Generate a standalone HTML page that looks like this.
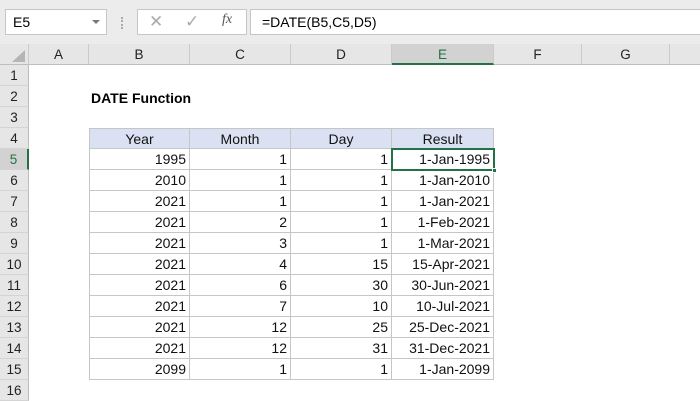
<!DOCTYPE html>
<html><head><style>
body{margin:0;width:700px;height:400px;overflow:hidden;background:#fff;font-family:"Liberation Sans",sans-serif;position:relative}
.a{position:absolute;box-sizing:border-box}
.tb{left:0;top:0;width:700px;height:44px;background:#ececec}
.box{background:#fff;border:1px solid #c6c6c6}
.ch{top:44px;height:21px;background:#e6e6e6;border-right:1px solid #cbcbcb;border-bottom:1px solid #bdbdbd;font-size:13.5px;text-align:center;line-height:21px;color:#222}
.rh{left:0;width:29px;height:21px;background:#e6e6e6;border-right:1px solid #bdbdbd;border-bottom:1px solid #d4d4d4;font-size:13.5px;text-align:center;line-height:21px;color:#222}
.c{height:21px;border-right:1px solid #c6c6c6;border-bottom:1px solid #c6c6c6;font-size:14px;line-height:21px;text-align:right;padding-right:3px;color:#111}
.h{background:#d9e1f2;text-align:center;padding:0}
</style></head><body>
<div class="a tb"></div>
<div class="a box" style="left:5px;top:9px;width:102px;height:26px;font-size:14px;line-height:24px;padding-left:7px">E5</div>
<div class="a" style="left:92px;top:20px;width:0;height:0;border-left:4px solid transparent;border-right:4px solid transparent;border-top:4px solid #777"></div>
<div class="a" style="left:121px;top:17px;width:2px;height:12px;border-left:2px dotted #aaa"></div>
<div class="a box" style="left:137px;top:9px;width:110px;height:26px"></div>
<div class="a" style="left:149px;top:12px;font-size:17px;color:#aaa">✕</div>
<div class="a" style="left:185px;top:12px;font-size:17px;color:#aaa">✓</div>
<div class="a" style="left:222px;top:12px;font-size:14px;font-style:italic;font-family:'Liberation Serif',serif;color:#555">fx</div>
<div class="a box" style="left:250px;top:9px;width:460px;height:26px;font-size:14px;line-height:24px;padding-left:11px">=DATE(B5,C5,D5)</div>
<div class="a ch" style="left:0;width:29px"></div>
<div class="a" style="left:12px;top:50px;width:0;height:0;border-left:13px solid transparent;border-bottom:12px solid #b5b5b5"></div>
<div class="a ch" style="left:29px;width:60px">A</div>
<div class="a ch" style="left:89px;width:101px">B</div>
<div class="a ch" style="left:190px;width:101px">C</div>
<div class="a ch" style="left:291px;width:101px">D</div>
<div class="a ch" style="left:392px;width:102px;background:#d2d2d2;border-bottom:2px solid #217346;color:#217346">E</div>
<div class="a ch" style="left:494px;width:88px">F</div>
<div class="a ch" style="left:582px;width:88px">G</div>
<div class="a ch" style="left:670px;width:40px"></div>
<div id="rows"></div>
<div class="a" style="left:91px;top:88px;font-size:14px;font-weight:bold;line-height:21px">DATE Function</div>
<script>
var d=[["Year","Month","Day","Result"],[1995,1,1,"1-Jan-1995"],[2010,1,1,"1-Jan-2010"],[2021,1,1,"1-Jan-2021"],[2021,2,1,"1-Feb-2021"],[2021,3,1,"1-Mar-2021"],[2021,4,15,"15-Apr-2021"],[2021,6,30,"30-Jun-2021"],[2021,7,10,"10-Jul-2021"],[2021,12,25,"25-Dec-2021"],[2021,12,31,"31-Dec-2021"],[2099,1,1,"1-Jan-2099"]];
var h="";
for(var r=1;r<=16;r++){var t=65+(r-1)*21;h+='<div class="a rh" style="top:'+t+'px'+(r==5?';background:#d2d2d2;border-right:2px solid #217346;color:#217346':'')+'">'+r+'</div>';}
var xs=[89,190,291,392,494];
for(var i=0;i<d.length;i++){var t=128+i*21;for(var j=0;j<4;j++){h+='<div class="a c'+(i==0?' h':'')+'" style="top:'+t+'px;left:'+xs[j]+'px;width:'+(xs[j+1]-xs[j])+'px'+(j==0?';border-left:1px solid #c6c6c6':'')+(i==0?';border-top:1px solid #c6c6c6':'')+'">'+d[i][j]+'</div>';}}
h+='<div class="a" style="left:391px;top:148px;width:104px;height:23px;border:2px solid #217346"></div>';
h+='<div class="a" style="left:492px;top:168px;width:5px;height:5px;background:#217346;border:1px solid #fff"></div>';
document.getElementById("rows").innerHTML=h;
</script>
</body></html>
